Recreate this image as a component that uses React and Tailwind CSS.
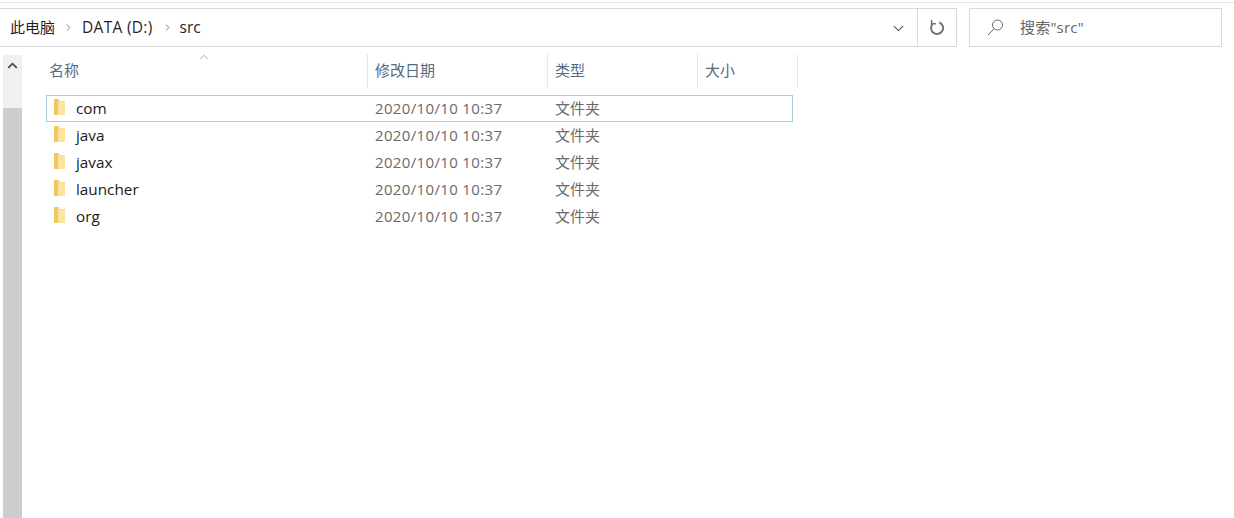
import React from 'react';
import { ChevronRight, ChevronDown, ChevronUp } from 'lucide-react';

const rows = ['com', 'java', 'javax', 'launcher', 'org'];

const FolderIcon = () => (
  <svg width="13" height="17" viewBox="0 0 13 17" className="shrink-0 -mt-[2px]">
    <path d="M1 0h5l1 2h5v14H1z" fill="#f9dd8c" />
    <path d="M5 3h7v13H5z" fill="#fbe49f" />
    <path d="M1 0h4v16H1z" fill="#f0c861" />
  </svg>
);

const RefreshIcon = () => (
  <svg width="16" height="16" viewBox="0 0 16 16" fill="none" stroke="#757575" strokeWidth="2" className="shrink-0 -mt-[2px]">
    <path d="M10.2 3.4A6 6 0 1 1 3.6 5" />
    <path d="M2.6 0.8v4h4.4" strokeWidth="1.6" />
  </svg>
);

const SearchIcon = () => (
  <svg width="17" height="17" viewBox="0 0 17 17" fill="none" stroke="#666" strokeWidth="1" className="shrink-0">
    <circle cx="10.5" cy="6" r="5" />
    <path d="M7 9.8L1 16" />
  </svg>
);

const HeaderCell = ({ width, children }) => (
  <div className={`${width} shrink-0 h-[34px] pl-[7px] pb-[2px] flex items-center border-r border-[#e8e8e8] text-[15px] text-[#566a80]`}>
    {children}
  </div>
);

const App = () => {
  return (
    <div className="w-[1234px] h-[518px] overflow-hidden bg-white flex flex-col" style={{ fontFamily: '"Open Sans", "Noto Sans CJK SC", sans-serif' }}>
      {/* Top strip */}
      <div className="h-[8px] shrink-0 pt-[2px]">
        <div className="h-px bg-[#e3e3e3]" />
      </div>

      {/* Address and search bars */}
      <div className="h-[39px] shrink-0 flex">
        <div className="w-[957px] flex items-center border-y border-r border-[#d9d9d9] pl-[10px] text-[15px] text-[#1f1f1f]">
          <span>此电脑</span>
          <ChevronRight size={11} strokeWidth={2} className="ml-[8px] mr-[8px] text-[#777]" />
          <span className="text-[15.5px] tracking-[0.3px]">DATA (D:)</span>
          <ChevronRight size={11} strokeWidth={2} className="ml-[9px] mr-[7px] text-[#777]" />
          <span className="text-[15.5px]">src</span>
          <div className="ml-auto flex items-center h-full">
            <ChevronDown size={17} strokeWidth={1.75} className="mr-[10px] mt-[2px] text-[#606060]" />
            <div className="w-[39px] h-full flex items-center justify-center border-l border-[#d9d9d9]">
              <RefreshIcon />
            </div>
          </div>
        </div>
        <div className="w-[253px] ml-[12px] flex items-center border border-[#d9d9d9] pl-[17px] text-[15px] text-[#666]">
          <SearchIcon />
          <span className="ml-[16px] tracking-[0.2px]">搜索"src"</span>
        </div>
      </div>

      {/* Main area */}
      <div className="flex-1 flex min-h-0 pl-[3px]">
        {/* Scrollbar */}
        <div className="w-[19px] mt-[8px] flex flex-col bg-[#f0f0f0]">
          <div className="h-[53px] flex justify-center pt-[3px]">
            <ChevronUp size={15} strokeWidth={3} className="text-[#505050]" />
          </div>
          <div className="flex-1 bg-[#cdcdcd]" />
        </div>

        {/* File list */}
        <div className="ml-[24px] w-[752px] pt-[7px]">
          <div className="relative flex">
            <ChevronUp size={14} strokeWidth={1} className="absolute left-[151px] -top-[4px] text-[#7a7a7a]" />
            <div className="w-[322px] shrink-0 h-[34px] pl-[3px] pb-[2px] flex items-center border-r border-[#e8e8e8] text-[15px] text-[#566a80]">名称</div>
            <HeaderCell width="w-[180px]">修改日期</HeaderCell>
            <HeaderCell width="w-[150px]">类型</HeaderCell>
            <HeaderCell width="w-[100px]">大小</HeaderCell>
          </div>
          <div className="mt-[7px] w-[747px]">
            {rows.map((name, i) => (
              <div key={name} className={`h-[27px] flex items-center border ${i === 0 ? 'border-[#a9cbdc]' : 'border-transparent'}`}>
                <div className="w-[321px] shrink-0 pl-[6px] flex items-center text-[15.3px] text-[#1a1a1a]">
                  <FolderIcon />
                  <span className="ml-[10px]">{name}</span>
                </div>
                <div className="w-[180px] shrink-0 pl-[7px] text-[15px] tracking-[0.35px] text-[#6a6a6a]">2020/10/10 10:37</div>
                <div className="w-[150px] shrink-0 pl-[7px] text-[15px] text-[#6a6a6a]">文件夹</div>
              </div>
            ))}
          </div>
        </div>
      </div>
    </div>
  );
};

export default App;
